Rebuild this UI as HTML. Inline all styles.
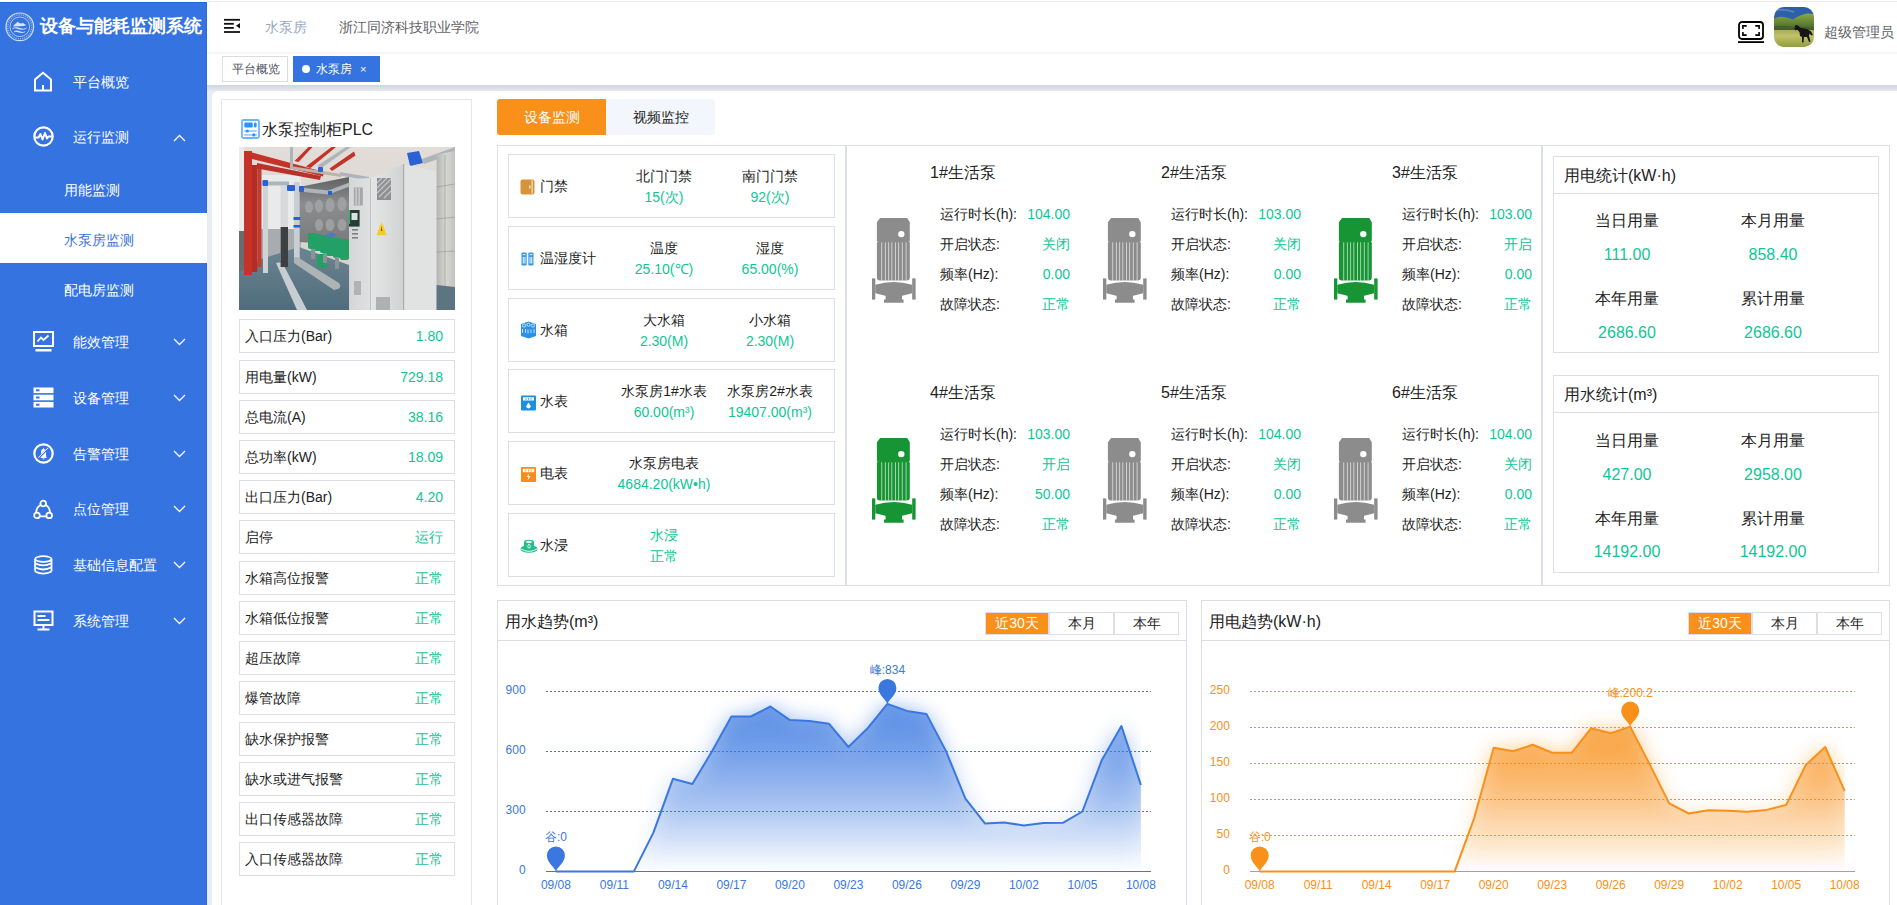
<!DOCTYPE html>
<html><head><meta charset="utf-8">
<style>
*{box-sizing:border-box;margin:0;padding:0}
html,body{width:1897px;height:905px;overflow:hidden;background:#fff;font-family:"Liberation Sans",sans-serif;color:#222}
.a{position:absolute}
.t{position:absolute;white-space:nowrap;line-height:20px;height:20px}
#topline{left:207px;top:1px;width:1690px;height:1px;background:#ececec}
#side{left:0;top:2px;width:207px;height:903px;background:#3473e0}
.mi{position:absolute;left:73px;color:#fff;font-size:14px;line-height:20px;height:20px;white-space:nowrap}
.si{position:absolute;left:64px;color:#fff;font-size:14px;line-height:20px;height:20px;white-space:nowrap}
.ico{position:absolute;left:33px;width:21px;height:21px}
.chev{position:absolute;left:173px;width:13px;height:8px}
/* header */
#hdr{left:207px;top:2px;width:1690px;height:50px;background:#fff}
#hshadow{left:207px;top:52px;width:1690px;height:3px;background:linear-gradient(#f0f1f3,#fff)}
#tabbar{left:207px;top:55px;width:1690px;height:30px;background:#fff}
#tshadow{left:207px;top:85px;width:1690px;height:6px;background:linear-gradient(#d0d4de,#e6e9f1)}
#main{left:207px;top:91px;width:1690px;height:814px;background:#e9ecf3}
#card{left:212px;top:91px;width:1700px;height:830px;background:#fff;border-radius:6px}
.tab{position:absolute;top:56px;height:26px;font-size:12px;line-height:24px;white-space:nowrap}

.bd{border:1px solid #dcdfe8}
.row{position:absolute;left:239px;width:216px;height:34px;border:1px solid #dcdfe8;font-size:14px;line-height:32px;white-space:nowrap}
.rl{position:absolute;left:5px;top:0;color:#222}
.rv{position:absolute;right:11px;top:0;color:#10c695}

.drow{position:absolute;left:508px;width:327px;height:64px;border:1px solid #dcdfe8}
.dl{position:absolute;left:31px;top:21px;font-size:14px;line-height:20px;color:#222;white-space:nowrap}
.dc{position:absolute;width:120px;text-align:center;font-size:14px;line-height:20px;white-space:nowrap;color:#222}
.tv{color:#10c695}
.di{position:absolute;left:11px;top:24px}

.pt{position:absolute;font-size:16px;line-height:22px;color:#222;white-space:nowrap}
.pl{position:absolute;font-size:14px;line-height:20px;color:#222;white-space:nowrap}
.pv{position:absolute;font-size:14px;line-height:20px;color:#10c695;white-space:nowrap;text-align:right;width:80px}

.sb{position:absolute;left:1553px;width:326px;border:1px solid #dcdfe8}
.sh{position:absolute;left:0;top:0;width:324px;border-bottom:1px solid #dcdfe8}
.stt{position:absolute;left:10px;font-size:16px;line-height:22px;color:#222;white-space:nowrap}
.sl{position:absolute;width:120px;text-align:center;font-size:16px;line-height:22px;color:#222;white-space:nowrap}
.sv{position:absolute;width:120px;text-align:center;font-size:16px;line-height:22px;color:#10c695;white-space:nowrap}
.cp{position:absolute;top:600px;height:320px;border:1px solid #dcdfe8}
.ch{position:absolute;left:0;top:0;height:40px;border-bottom:1px solid #dcdfe8}
.btns{position:absolute;top:11px;height:23px;display:flex}
.btn{height:23px;border:1px solid #dcdfe8;font-size:14px;line-height:21px;text-align:center;color:#222;background:#fff}
</style></head>
<body>
<div class="a" id="topline"></div>
<div class="a" id="side">
</div>
<div class="a" style="left:0;top:2px;width:207px;height:1px;background:#2468de"></div>
<div class="a" style="left:206px;top:2px;width:1px;height:903px;background:#2a6adf"></div>
<!-- logo -->
<svg class="a" style="left:5px;top:12px" width="30" height="30" viewBox="0 0 30 30">
 <g fill="none" stroke="#fff" stroke-opacity=".75">
  <circle cx="14.8" cy="14.8" r="13.8" stroke-width="1.2"/>
  <circle cx="14.8" cy="14.8" r="9.8" stroke-width=".8"/>
  <circle cx="14.8" cy="14.8" r="12" stroke-width="1.6" stroke-dasharray="1 1.2" stroke-opacity=".5"/>
 </g>
 <g fill="#fff" fill-opacity=".8">
  <path d="M9 13 L13 9.5 L14 11 L17 11.5 L18 10.5 L19 12 L21.5 13 L19 14 L8 14.5 Z"/>
  <path d="M7.5 16 Q11 14.5 15 16 T22 15.5 L21 17 Q17 18.5 13 17 T8 17.5 Z"/>
  <path d="M9 19 Q12 18 15 19.3 T20.5 19 L19.5 20.5 Q16 21.5 13 20.3 T9.5 20.5 Z"/>
 </g>
</svg>
<div class="t" style="left:40px;top:14px;height:24px;line-height:24px;font-size:18px;font-weight:bold;color:#fff">设备与能耗监测系统</div>

<!-- menu -->
<svg class="ico" style="top:71px;width:20px;height:21px" viewBox="0 0 20 21"><path d="M2 19.5 V8.5 L10 1.8 L18 8.5 V19.5 H2 Z M10 19.5 V14" fill="none" stroke="#fff" stroke-width="2" stroke-linejoin="miter"/></svg>
<div class="mi" style="top:72px">平台概览</div>

<svg class="ico" style="top:126px" viewBox="0 0 21 21"><circle cx="10.5" cy="10.5" r="9.2" fill="none" stroke="#fff" stroke-width="2.2"/><path d="M2.5 11.5 H5.5 L7.5 8 L9.5 13.5 L12 7 L14 12.5 L15.5 10.5 H18.5" fill="none" stroke="#fff" stroke-width="2" stroke-linejoin="round" stroke-linecap="round"/></svg>
<div class="mi" style="top:127px">运行监测</div>
<svg class="chev" style="top:134px" viewBox="0 0 13 8"><path d="M1 7 L6.5 1.5 L12 7" fill="none" stroke="#fff" stroke-width="1.3"/></svg>

<div class="si" style="top:180px">用能监测</div>
<div class="a" style="left:0;top:213px;width:207px;height:50px;background:#fff"></div>
<div class="si" style="top:230px;color:#3473e0">水泵房监测</div>
<div class="si" style="top:280px">配电房监测</div>

<svg class="ico" style="top:331px" viewBox="0 0 21 21"><rect x="1" y="1" width="19" height="14" fill="none" stroke="#fff" stroke-width="2"/><path d="M4.5 10.5 L8 6.5 L10.5 9 L15.5 4.5" fill="none" stroke="#fff" stroke-width="1.8"/><rect x="2.5" y="18" width="16" height="2.5" fill="#fff"/></svg>
<div class="mi" style="top:332px">能效管理</div>
<svg class="chev" style="top:338px" viewBox="0 0 13 8"><path d="M1 1 L6.5 6.5 L12 1" fill="none" stroke="#fff" stroke-width="1.3"/></svg>

<svg class="ico" style="top:387px" viewBox="0 0 21 21"><rect x="0.5" y="0.5" width="20" height="5.6" fill="#fff"/><rect x="0.5" y="7.7" width="20" height="5.6" fill="#fff"/><rect x="0.5" y="14.9" width="20" height="5.6" fill="#fff"/><rect x="3" y="2.3" width="3.5" height="2" fill="#3473e0"/><rect x="3" y="9.5" width="3.5" height="2" fill="#3473e0"/><rect x="3" y="16.7" width="3.5" height="2" fill="#3473e0"/></svg>
<div class="mi" style="top:388px">设备管理</div>
<svg class="chev" style="top:394px" viewBox="0 0 13 8"><path d="M1 1 L6.5 6.5 L12 1" fill="none" stroke="#fff" stroke-width="1.3"/></svg>

<svg class="ico" style="top:443px" viewBox="0 0 21 21"><circle cx="10.5" cy="10.5" r="9.2" fill="none" stroke="#fff" stroke-width="2.2"/><path d="M7.2 15 Q8 14 8 12 V9 Q8 6.5 9.8 6 Q9.8 5.2 10.5 5.2 Q11.2 5.2 11.2 6 Q13 6.5 13 9 V12 Q13 14 13.9 15 Z M9.5 15.5 H11.5 Q11.5 16.6 10.5 16.6 Q9.5 16.6 9.5 15.5Z" fill="#fff"/><path d="M5 15.5 L16 4.5" stroke="#3473e0" stroke-width="1.8"/><path d="M5.3 14.6 L15.3 4.6" stroke="#fff" stroke-width="1"/></svg>
<div class="mi" style="top:444px">告警管理</div>
<svg class="chev" style="top:450px" viewBox="0 0 13 8"><path d="M1 1 L6.5 6.5 L12 1" fill="none" stroke="#fff" stroke-width="1.3"/></svg>

<svg class="ico" style="top:499px" viewBox="0 0 21 21"><g fill="none" stroke="#fff" stroke-width="1.8"><circle cx="10.2" cy="4.5" r="2.8"/><circle cx="4" cy="16.4" r="2.8"/><circle cx="16.2" cy="16.4" r="2.8"/><path d="M7.6 5.8 Q3 9 3.2 13.6 M12.8 5.8 Q17 9 17 13.6 M6.8 17.3 H13.4"/></g></svg>
<div class="mi" style="top:499px">点位管理</div>
<svg class="chev" style="top:505px" viewBox="0 0 13 8"><path d="M1 1 L6.5 6.5 L12 1" fill="none" stroke="#fff" stroke-width="1.3"/></svg>

<svg class="ico" style="top:555px" viewBox="0 0 21 21"><g fill="none" stroke="#fff" stroke-width="1.8"><ellipse cx="10.3" cy="4" rx="8.2" ry="2.8"/><path d="M2.1 4 V16.5 M18.5 4 V16.5"/><path d="M2.1 8.2 Q10.3 12.6 18.5 8.2 M2.1 12.3 Q10.3 16.7 18.5 12.3 M2.1 16.5 Q10.3 20.9 18.5 16.5"/></g></svg>
<div class="mi" style="top:555px">基础信息配置</div>
<svg class="chev" style="top:561px" viewBox="0 0 13 8"><path d="M1 1 L6.5 6.5 L12 1" fill="none" stroke="#fff" stroke-width="1.3"/></svg>

<svg class="ico" style="top:610px" viewBox="0 0 21 21"><g fill="#fff"><path d="M0.5 0.5 H20.5 V16 H0.5 Z M2.5 2.5 V14 H18.5 V2.5 Z" fill-rule="evenodd"/><rect x="4.5" y="5" width="8" height="2"/><rect x="4.5" y="9" width="12" height="2"/><rect x="9.5" y="16" width="2" height="3"/><rect x="4.5" y="18.5" width="12" height="2"/></g></svg>
<div class="mi" style="top:611px">系统管理</div>
<svg class="chev" style="top:617px" viewBox="0 0 13 8"><path d="M1 1 L6.5 6.5 L12 1" fill="none" stroke="#fff" stroke-width="1.3"/></svg>

<!-- header -->
<div class="a" id="hdr"></div>
<div class="a" id="hshadow"></div>
<div class="a" id="tabbar"></div>
<div class="a" id="tshadow"></div>
<div class="a" id="main"></div>
<div class="a" id="card"></div>

<svg class="a" style="left:224px;top:18px" width="16" height="16" viewBox="0 0 16 16"><g fill="#111"><rect x="0" y="0.9" width="16" height="1.8"/><rect x="0" y="4.9" width="9.8" height="1.8"/><rect x="0" y="9" width="9.8" height="1.8"/><rect x="0" y="13.1" width="16" height="1.8"/><path d="M16 5 V10.6 L12 7.8 Z"/></g></svg>
<div class="t" style="left:265px;top:17px;font-size:14px;color:#97a8be">水泵房</div>
<div class="t" style="left:339px;top:17px;font-size:14px;color:#606266">浙江同济科技职业学院</div>

<svg class="a" style="left:1738px;top:21px" width="26" height="22" viewBox="0 0 26 22"><rect x="1" y="1" width="24" height="17" rx="3" fill="none" stroke="#000" stroke-width="1.8"/><g fill="none" stroke="#000" stroke-width="1.6"><path d="M4.9 7.9 V4.9 H8.7 M21.1 7.9 V4.9 H17.3 M4.9 11 V14.1 H8.7 M21.1 11 V14.1 H17.3"/></g><rect x="0" y="20.2" width="26" height="1.8" fill="#000"/></svg>
<div class="a" style="left:1774px;top:7px;width:40px;height:40px;border-radius:10px;overflow:hidden">
 <svg width="40" height="40" viewBox="0 0 40 40">
  <defs><linearGradient id="sky" x1="0" y1="0" x2="0" y2="1"><stop offset="0" stop-color="#2d5da6"/><stop offset="1" stop-color="#2f67b8"/></linearGradient>
  <linearGradient id="hill" x1="0" y1="0" x2="0" y2="1"><stop offset="0" stop-color="#8aa845"/><stop offset=".6" stop-color="#5f7f34"/><stop offset="1" stop-color="#3f5a2a"/></linearGradient>
  <linearGradient id="fld" x1="0" y1="0" x2="0" y2="1"><stop offset="0" stop-color="#a8ac5a"/><stop offset=".35" stop-color="#c3c06a"/><stop offset="1" stop-color="#8f9e3e"/></linearGradient>
  <filter id="avb"><feGaussianBlur stdDeviation=".5"/></filter></defs>
  <g filter="url(#avb)">
  <rect width="40" height="40" fill="url(#sky)"/>
  <path d="M3 3 Q12 2 20 5" stroke="#8fb0d8" stroke-width="1.5" fill="none" opacity=".5"/>
  <path d="M-1 12 Q5 9 10 10 Q16 11 19 12.5 Q25 8 33 6.5 Q38 6 41 8 V24 H-1 Z" fill="url(#hill)"/>
  <path d="M-1 19 Q10 18 20 20 Q30 19 41 21 V25 H-1 Z" fill="#46612c"/>
  <rect y="23" width="40" height="17" fill="url(#fld)"/>
  <path d="M21 18.5 L23 18 L27 21 L33 22 L37 24.5 L39 28 L37.5 28.5 L35.5 26.5 L35 29 L36.5 34.5 L35 35 L33 30 L30 30 L29.5 35.5 L28 35.5 L28 30 L26 29 L25.5 25 L23 22.5 L21.5 23.5 L20.5 22 Z" fill="#141414"/>
  </g>
 </svg>
</div>
<div class="t" style="left:1824px;top:22px;font-size:14px;color:#606266">超级管理员</div>

<div class="tab" style="left:222px;width:66px;border:1px solid #d8dce5;color:#495060;padding-left:9px">平台概览</div>
<div class="tab" style="left:293px;width:87px;background:#3473e0;border:1px solid #3473e0;color:#fff">
 <span class="a" style="left:8px;top:8px;width:8px;height:8px;border-radius:50%;background:#fff"></span>
 <span class="a" style="left:22px;top:0">水泵房</span>
 <span class="a" style="left:66px;top:0;font-size:11px">×</span>
</div>


<!-- PLC panel -->
<div class="a" style="left:221px;top:99px;width:251px;height:830px;border:1px solid #e6e6e6;border-bottom:none"></div>
<svg class="a" style="left:241px;top:119px" width="19" height="20" viewBox="0 0 19 20">
 <rect x="1" y="1" width="17" height="18" rx="1.5" fill="none" stroke="#6cb6ff" stroke-width="1.8"/>
 <rect x="3.3" y="3.5" width="8.5" height="5" rx="1.2" fill="#2a93ff"/>
 <rect x="13" y="3.5" width="2.6" height="5" rx="1.2" fill="#2a93ff"/>
 <rect x="3.2" y="11.3" width="12.6" height="1.4" fill="#7fbfff"/>
 <rect x="3.2" y="15.2" width="12.6" height="1.4" fill="#7fbfff"/>
 <circle cx="6.3" cy="12" r="1.6" fill="#2a93ff"/>
 <circle cx="12.8" cy="15.9" r="1.6" fill="#2a93ff"/>
</svg>
<div class="t" style="left:262px;top:119px;height:22px;line-height:22px;font-size:16px;color:#222">水泵控制柜PLC</div>
<svg class="a" style="left:239px;top:147px" width="216" height="163" viewBox="0 0 216 163">
 <defs>
  <linearGradient id="ceil" x1="0" y1="0" x2="0" y2="1"><stop offset="0" stop-color="#e2ddd8"/><stop offset="1" stop-color="#d3cdc6"/></linearGradient>
  <linearGradient id="floor" x1="0" y1="0" x2="0" y2="1"><stop offset="0" stop-color="#6d8492"/><stop offset="1" stop-color="#4f6c7c"/></linearGradient>
  <linearGradient id="cabA" x1="0" y1="0" x2="1" y2="0"><stop offset="0" stop-color="#d4d7d7"/><stop offset="1" stop-color="#dfe1e1"/></linearGradient>
  <linearGradient id="cabB" x1="0" y1="0" x2="1" y2="0"><stop offset="0" stop-color="#e4e6e6"/><stop offset=".6" stop-color="#dadcdc"/><stop offset="1" stop-color="#cfd2d2"/></linearGradient>
  <linearGradient id="steel" x1="0" y1="0" x2="1" y2="0"><stop offset="0" stop-color="#b4b5b2"/><stop offset=".5" stop-color="#d6d6d2"/><stop offset="1" stop-color="#c2c3c0"/></linearGradient>
  <linearGradient id="tank" x1="0" y1="0" x2="0" y2="1"><stop offset="0" stop-color="#5f6264"/><stop offset=".4" stop-color="#8b8d8e"/><stop offset="1" stop-color="#77797a"/></linearGradient>
  <filter id="soft"><feGaussianBlur stdDeviation=".45"/></filter>
 </defs>
 <g filter="url(#soft)">
 <rect width="216" height="163" fill="url(#ceil)"/>
 <rect x="0" y="0" width="5" height="163" fill="#ecebea"/>
 <rect x="0" y="84" width="5" height="45" fill="#6a6c6e"/>
 <rect x="22" y="28" width="40" height="60" fill="#e9eaea"/>
 <rect x="22" y="82" width="40" height="30" fill="#a9acae"/>
 <path d="M60 40 L110 30 L110 98 L60 95 Z" fill="url(#tank)"/>
 <g fill="#a4a6a7" opacity=".8"><ellipse cx="70" cy="60" rx="4" ry="6"/><ellipse cx="80" cy="59" rx="4" ry="6.5"/><ellipse cx="91" cy="58" rx="4.5" ry="7"/><ellipse cx="103" cy="57" rx="4.5" ry="7"/><ellipse cx="80" cy="78" rx="4" ry="6"/><ellipse cx="91" cy="78" rx="4.5" ry="6"/><ellipse cx="103" cy="78" rx="4.5" ry="6"/></g>
 <path d="M0 125 L22 112 L60 100 L110 118 L110 163 L0 163 Z" fill="url(#floor)"/>
 <path d="M37 116 L43 115 L68 163 L58 163 Z" fill="#c7ced2"/>
 <rect x="41.6" y="39" width="7.4" height="75" fill="#d7d9da"/>
 <rect x="41.6" y="80" width="7.4" height="40" fill="#3d4043"/>
 <rect x="24" y="36" width="5" height="90" fill="#cfd3d6"/>
 <rect x="55" y="35" width="5.7" height="80" fill="#c9ced2"/>
 <rect x="54.5" y="70" width="6.7" height="3" fill="#2b5fd0"/><rect x="54.5" y="78" width="6.7" height="2.5" fill="#2b5fd0"/>
 <g fill="#c4322a">
  <path d="M5 4 H13 V128 H5 Z"/>
  <path d="M13 18 H18.2 V125 H13 Z" fill="#b52e27"/>
  <path d="M18.2 21 H22.5 V120 H18.2 Z" fill="#c23a30"/>
  <path d="M9 4.4 L85 25 L84 29.5 L13 12 Z"/><path d="M18 16 L82 29 L81 33 L18 21.5 Z" fill="#b8302a"/>
  <path d="M55.5 14 L69.5 0 L73.5 0 L59.5 15 Z"/>
  <path d="M67 19.5 L92.5 0 L97 0 L71.5 21 Z"/>
  <path d="M90.5 21.4 L115 4.5 L116.5 8.5 L93 24 Z"/>
 </g>
 <g fill="#aeb5ba">
  <path d="M78.5 18.5 L107 0 L112 0 L81.5 21.5 Z"/>
  <path d="M51 0 H54 V21 H51 Z"/>
  <path d="M51 19 L102 27 L102 30 L51 22 Z" fill="#b9b4a8"/>
  <path d="M23.5 34.5 H50 V38.5 H23.5 Z"/>
  <path d="M65 41 L89.4 43.6 L110.6 35.5 L110.6 39.5 L89.4 47.5 L65 45 Z"/>
  <path d="M101 25 L130 30 L130 33.5 L101 28.5 Z"/>
  <path d="M183 12 L216 0 L216 6 L185 17 Z"/>
 </g>
 <g fill="#2a62d6"><rect x="23.5" y="33" width="5.5" height="6" rx="1"/><rect x="48" y="38" width="8" height="6" rx="1"/><rect x="60" y="39" width="5" height="6" rx="1"/><rect x="79" y="20" width="5" height="5" rx="1"/><rect x="89" y="44" width="4" height="4"/><path d="M168 6 L180 4 L184 16 L171 19 Z"/></g>
 <g fill="#22a066">
  <rect x="69" y="86" width="8" height="16" rx="2"/>
  <rect x="75" y="87" width="8" height="17" rx="2"/>
  <rect x="81" y="88" width="8" height="18" rx="2"/>
  <rect x="87" y="90" width="9" height="19" rx="2"/>
  <rect x="94" y="91" width="9" height="20" rx="2"/>
  <rect x="101" y="92" width="9" height="21" rx="2"/>
  <rect x="78" y="107" width="10" height="14" rx="3"/>
 </g>
 <path d="M86 90 Q92 82 98 89 Z" fill="#3f7bd0"/>
 <path d="M55 111 Q57 109 60 111 L100 136 Q103 140 99 142 L95 143 L55 116 Z" fill="#aeb3b5"/>
 <g fill="#8f9294"><rect x="72" y="102" width="4" height="10"/><rect x="84" y="106" width="4" height="10"/><rect x="96" y="110" width="4" height="12"/></g>
 <path d="M110.6 32 L131.3 31 L131.3 163 L110.6 163 Z" fill="url(#cabA)"/>
 <path d="M131.3 31 L164.7 17.2 L164.7 163 L131.3 163 Z" fill="url(#cabB)"/>
 <path d="M164.7 17.2 L197.6 24.6 L197.6 163 L164.7 163 Z" fill="#e1e3e3"/>
 <rect x="164" y="17" width="1.2" height="146" fill="#a9adae"/>
 <rect x="131" y="31" width=".8" height="132" fill="#b8bbbc"/>
 <path d="M197.6 7.6 L216 4 L216 163 L197.6 163 Z" fill="url(#steel)"/>
 <g stroke="#8f908e" stroke-width=".8" fill="none" opacity=".7"><path d="M197.6 40 L216 37 M197.6 72 L216 70 M197.6 105 L216 104 M206 8 V163"/></g>
 <path d="M197.6 138 L216 140 L216 163 L197.6 163 Z" fill="#5d7482"/>
 <rect x="138" y="31" width="14" height="22" fill="#8e9193"/>
 <g stroke="#c7c9ca" stroke-width="1.1"><path d="M138 36 L143 31 M138 41 L148 31 M138 46 L152 32 M140 50 L152 38 M145 51 L152 44"/></g>
 <rect x="114.8" y="40.5" width="9" height="18" fill="#a4a7a8"/>
 <g fill="#d0d2d2"><rect x="116.5" y="41" width="1.3" height="17"/><rect x="119.5" y="41" width="1.3" height="17"/></g>
 <rect x="110" y="63" width="10.6" height="16.6" fill="#263d37"/>
 <rect x="112.5" y="66" width="6" height="7" fill="#d9e6df"/>
 <rect x="110" y="63" width="1.2" height="14" fill="#2fae6a"/>
 <path d="M142.6 75 L147.7 88.3 L137.6 88.3 Z" fill="#f0cf1a"/>
 <path d="M142.6 79 L143.3 84 L141.9 84 Z" fill="#9a2a1a"/>
 <g fill="#7c7f80"><rect x="113" y="82" width="6" height="1.6"/><rect x="113" y="86" width="6" height="1.6"/><rect x="113" y="90" width="6" height="1.6"/></g>
 <rect x="115" y="134" width="7" height="14" fill="#b1b4b4"/>
 <rect x="137" y="150" width="14" height="13" fill="#aeb1b1"/>
 </g>
</svg>
<div class="row" style="top:319px"><span class="rl">入口压力(Bar)</span><span class="rv">1.80</span></div>
<div class="row" style="top:360px"><span class="rl">用电量(kW)</span><span class="rv">729.18</span></div>
<div class="row" style="top:400px"><span class="rl">总电流(A)</span><span class="rv">38.16</span></div>
<div class="row" style="top:440px"><span class="rl">总功率(kW)</span><span class="rv">18.09</span></div>
<div class="row" style="top:480px"><span class="rl">出口压力(Bar)</span><span class="rv">4.20</span></div>
<div class="row" style="top:520px"><span class="rl">启停</span><span class="rv">运行</span></div>
<div class="row" style="top:561px"><span class="rl">水箱高位报警</span><span class="rv">正常</span></div>
<div class="row" style="top:601px"><span class="rl">水箱低位报警</span><span class="rv">正常</span></div>
<div class="row" style="top:641px"><span class="rl">超压故障</span><span class="rv">正常</span></div>
<div class="row" style="top:681px"><span class="rl">爆管故障</span><span class="rv">正常</span></div>
<div class="row" style="top:722px"><span class="rl">缺水保护报警</span><span class="rv">正常</span></div>
<div class="row" style="top:762px"><span class="rl">缺水或进气报警</span><span class="rv">正常</span></div>
<div class="row" style="top:802px"><span class="rl">出口传感器故障</span><span class="rv">正常</span></div>
<div class="row" style="top:842px"><span class="rl">入口传感器故障</span><span class="rv">正常</span></div>

<!-- device tabs -->
<div class="a" style="left:497px;top:99px;width:109px;height:36px;background:#f8901a;border-radius:3px 0 0 3px;color:#fff;font-size:14px;line-height:36px;text-align:center">设备监测</div>
<div class="a" style="left:606px;top:99px;width:109px;height:36px;background:#f3f7fd;border-radius:0 3px 3px 0;color:#222;font-size:14px;line-height:36px;text-align:center">视频监控</div>
<div class="a bd" style="left:497px;top:145px;width:349px;height:441px"></div>
<div class="a bd" style="left:846px;top:145px;width:696px;height:441px"></div>
<div class="a bd" style="left:1542px;top:145px;width:348px;height:441px"></div>
<div class="drow" style="top:154px"><svg class="di" style="left:11px;top:24px" width="15" height="16" viewBox="0 0 15 16"><rect x="0.5" y="0.5" width="14" height="15" rx="2" fill="#d6953a"/><rect x="11.6" y="1.3" width="1" height="13.4" fill="#fbeedd"/><rect x="9.3" y="6.5" width="1.1" height="3" fill="#fff"/></svg><div class="dl">门禁</div><div class="dc" style="left:95px;top:11px">北门门禁</div><div class="dc tv" style="left:95px;top:32px">15(次)</div><div class="dc" style="left:201px;top:11px">南门门禁</div><div class="dc tv" style="left:201px;top:32px">92(次)</div></div>
<div class="drow" style="top:226px"><svg class="di" style="left:12px;top:25px" width="13" height="14" viewBox="0 0 13 14"><rect x="0.5" y="0.5" width="5.2" height="13" rx="0.8" fill="#3b9be0"/><rect x="7.3" y="0.5" width="5.2" height="13" rx="0.8" fill="#3b9be0"/><g fill="#fff"><rect x="1.8" y="2.2" width="2.6" height="0.9"/><rect x="1.8" y="5" width="0.9" height="6.5"/><rect x="3.5" y="5" width="0.9" height="6.5"/><rect x="8.6" y="2.2" width="2.6" height="0.9"/><rect x="8.6" y="5" width="0.9" height="6.5"/><rect x="10.3" y="5" width="0.9" height="6.5"/></g></svg><div class="dl">温湿度计</div><div class="dc" style="left:95px;top:11px">温度</div><div class="dc tv" style="left:95px;top:32px">25.10(℃)</div><div class="dc" style="left:201px;top:11px">湿度</div><div class="dc tv" style="left:201px;top:32px">65.00(%)</div></div>
<div class="drow" style="top:298px"><svg class="di" style="left:11px;top:22px" width="17" height="18" viewBox="0 0 17 18"><path d="M1 3 L8.5 0.5 L16 3 V15 L8.5 17.5 L1 15 Z" fill="#2b90e6"/><g fill="none" stroke="#fff" stroke-width="0.8" opacity=".9"><circle cx="4" cy="4.5" r="1.6"/><circle cx="8.5" cy="3.7" r="1.6"/><circle cx="13" cy="4.5" r="1.6"/><path d="M2.5 8 V12 M5.5 8 V12 M8 8.5 V12.5 M11 8.5 V12 M14 8 V12"/></g></svg><div class="dl">水箱</div><div class="dc" style="left:95px;top:11px">大水箱</div><div class="dc tv" style="left:95px;top:32px">2.30(M)</div><div class="dc" style="left:201px;top:11px">小水箱</div><div class="dc tv" style="left:201px;top:32px">2.30(M)</div></div>
<div class="drow" style="top:369px"><svg class="di" style="left:12px;top:25px" width="15" height="16" viewBox="0 0 15 16"><rect x="0" y="0.5" width="15" height="15" rx="1" fill="#1d8fe0"/><rect x="2" y="2.3" width="11" height="3.2" fill="#fff"/><rect x="4.6" y="3" width="0.8" height="1.8" fill="#1d8fe0"/><rect x="7.1" y="3" width="0.8" height="1.8" fill="#1d8fe0"/><rect x="9.6" y="3" width="0.8" height="1.8" fill="#1d8fe0"/><path d="M7.5 7.5 Q5.3 10.3 5.3 11.6 Q5.3 13.4 7.5 13.4 Q9.7 13.4 9.7 11.6 Q9.7 10.3 7.5 7.5 Z" fill="#fff"/></svg><div class="dl">水表</div><div class="dc" style="left:95px;top:11px">水泵房1#水表</div><div class="dc tv" style="left:95px;top:32px">60.00(m³)</div><div class="dc" style="left:201px;top:11px">水泵房2#水表</div><div class="dc tv" style="left:201px;top:32px">19407.00(m³)</div></div>
<div class="drow" style="top:441px"><svg class="di" style="left:12px;top:25px" width="15" height="15" viewBox="0 0 15 15"><rect x="0" y="0" width="15" height="15" rx="1" fill="#f88b1e"/><rect x="1.8" y="1.8" width="11.4" height="3.4" fill="#fff"/><rect x="4.4" y="2.5" width="0.8" height="2" fill="#f88b1e"/><rect x="7.1" y="2.5" width="0.8" height="2" fill="#f88b1e"/><rect x="9.8" y="2.5" width="0.8" height="2" fill="#f88b1e"/><path d="M8.2 6.5 L5.5 10 H7.5 L6.6 13.3 L9.6 9.3 H7.6 Z" fill="#fff"/></svg><div class="dl">电表</div><div class="dc" style="left:95px;top:11px">水泵房电表</div><div class="dc tv" style="left:95px;top:32px">4684.20(kW•h)</div></div>
<div class="drow" style="top:513px"><svg class="di" style="left:11px;top:25px" width="18" height="14" viewBox="0 0 18 14"><ellipse cx="9" cy="10" rx="8.6" ry="3.8" fill="#22bf8c"/><path d="M0.6 9.8 Q9 15 17.4 9.8" fill="none" stroke="#fff" stroke-width="0.9"/><path d="M4 3 V9 Q9 12 14 9 V3 Z" fill="#22bf8c"/><ellipse cx="9" cy="3" rx="5" ry="2.3" fill="#22bf8c"/><ellipse cx="9" cy="2.9" rx="3" ry="1.1" fill="#fff"/><path d="M9 5 Q7.7 7 7.7 7.8 Q7.7 9 9 9 Q10.3 9 10.3 7.8 Q10.3 7 9 5Z" fill="none" stroke="#fff" stroke-width=".8"/></svg><div class="dl">水浸</div><div class="dc" style="left:95px;top:11px"><span class='tv'>水浸</span></div><div class="dc tv" style="left:95px;top:32px">正常</div></div>

<svg width="0" height="0" style="position:absolute">
 <defs>
  <symbol id="pump" viewBox="0 0 44 85">
   <path d="M8.1 0 H35.2 L37.8 4.2 V22.8 L37 23.8 L37.8 24.8 V59.6 Q37.8 62.6 34.8 62.6 H7.9 Q4.9 62.6 4.9 59.6 V24.8 L5.7 23.8 L4.9 22.8 V4.2 Z"/>
   <rect x="0" y="60.4" width="3.3" height="21.2"/>
   <rect x="40.2" y="60.4" width="3.4" height="21.2"/>
   <path d="M3.3 66.8 Q21.8 61.2 40.2 66.8 V75.3 Q21.8 81.5 3.3 75.3 Z"/>
   <path d="M13.6 76 H30 V81.6 H31.6 V84.8 H12 V81.6 H13.6 Z"/>
  </symbol>
 </defs>
</svg>

<svg class="a" style="left:872px;top:218px" width="44" height="85" viewBox="0 0 44 85"><use href="#pump" fill="#8c8c8c"/><rect x="9.2" y="24.3" width="1" height="38.5" fill="#fff" opacity=".6"/><rect x="12.9" y="24.3" width="1" height="38.5" fill="#fff" opacity=".6"/><rect x="16.1" y="24.3" width="1" height="38.5" fill="#fff" opacity=".6"/><rect x="19.3" y="24.3" width="1" height="38.5" fill="#fff" opacity=".6"/><rect x="23" y="24.3" width="1" height="38.5" fill="#fff" opacity=".6"/><rect x="26.1" y="24.3" width="1" height="38.5" fill="#fff" opacity=".6"/><rect x="29.8" y="24.3" width="1" height="38.5" fill="#fff" opacity=".6"/><rect x="33.6" y="24.3" width="1" height="38.5" fill="#fff" opacity=".6"/><circle cx="29.3" cy="16.1" r="3.2" fill="#fff"/></svg>
<div class="pt" style="left:930px;top:162px">1#生活泵</div>
<div class="pl" style="left:940px;top:204px">运行时长(h):</div><div class="pv" style="left:990px;top:204px">104.00</div>
<div class="pl" style="left:940px;top:234px">开启状态:</div><div class="pv" style="left:990px;top:234px">关闭</div>
<div class="pl" style="left:940px;top:264px">频率(Hz):</div><div class="pv" style="left:990px;top:264px">0.00</div>
<div class="pl" style="left:940px;top:294px">故障状态:</div><div class="pv" style="left:990px;top:294px">正常</div>
<svg class="a" style="left:1103px;top:218px" width="44" height="85" viewBox="0 0 44 85"><use href="#pump" fill="#8c8c8c"/><rect x="9.2" y="24.3" width="1" height="38.5" fill="#fff" opacity=".6"/><rect x="12.9" y="24.3" width="1" height="38.5" fill="#fff" opacity=".6"/><rect x="16.1" y="24.3" width="1" height="38.5" fill="#fff" opacity=".6"/><rect x="19.3" y="24.3" width="1" height="38.5" fill="#fff" opacity=".6"/><rect x="23" y="24.3" width="1" height="38.5" fill="#fff" opacity=".6"/><rect x="26.1" y="24.3" width="1" height="38.5" fill="#fff" opacity=".6"/><rect x="29.8" y="24.3" width="1" height="38.5" fill="#fff" opacity=".6"/><rect x="33.6" y="24.3" width="1" height="38.5" fill="#fff" opacity=".6"/><circle cx="29.3" cy="16.1" r="3.2" fill="#fff"/></svg>
<div class="pt" style="left:1161px;top:162px">2#生活泵</div>
<div class="pl" style="left:1171px;top:204px">运行时长(h):</div><div class="pv" style="left:1221px;top:204px">103.00</div>
<div class="pl" style="left:1171px;top:234px">开启状态:</div><div class="pv" style="left:1221px;top:234px">关闭</div>
<div class="pl" style="left:1171px;top:264px">频率(Hz):</div><div class="pv" style="left:1221px;top:264px">0.00</div>
<div class="pl" style="left:1171px;top:294px">故障状态:</div><div class="pv" style="left:1221px;top:294px">正常</div>
<svg class="a" style="left:1334px;top:218px" width="44" height="85" viewBox="0 0 44 85"><use href="#pump" fill="#179433"/><rect x="9.2" y="24.3" width="1" height="38.5" fill="#fff" opacity=".6"/><rect x="12.9" y="24.3" width="1" height="38.5" fill="#fff" opacity=".6"/><rect x="16.1" y="24.3" width="1" height="38.5" fill="#fff" opacity=".6"/><rect x="19.3" y="24.3" width="1" height="38.5" fill="#fff" opacity=".6"/><rect x="23" y="24.3" width="1" height="38.5" fill="#fff" opacity=".6"/><rect x="26.1" y="24.3" width="1" height="38.5" fill="#fff" opacity=".6"/><rect x="29.8" y="24.3" width="1" height="38.5" fill="#fff" opacity=".6"/><rect x="33.6" y="24.3" width="1" height="38.5" fill="#fff" opacity=".6"/><circle cx="29.3" cy="16.1" r="3.2" fill="#fff"/></svg>
<div class="pt" style="left:1392px;top:162px">3#生活泵</div>
<div class="pl" style="left:1402px;top:204px">运行时长(h):</div><div class="pv" style="left:1452px;top:204px">103.00</div>
<div class="pl" style="left:1402px;top:234px">开启状态:</div><div class="pv" style="left:1452px;top:234px">开启</div>
<div class="pl" style="left:1402px;top:264px">频率(Hz):</div><div class="pv" style="left:1452px;top:264px">0.00</div>
<div class="pl" style="left:1402px;top:294px">故障状态:</div><div class="pv" style="left:1452px;top:294px">正常</div>
<svg class="a" style="left:872px;top:438px" width="44" height="85" viewBox="0 0 44 85"><use href="#pump" fill="#179433"/><rect x="9.2" y="24.3" width="1" height="38.5" fill="#fff" opacity=".6"/><rect x="12.9" y="24.3" width="1" height="38.5" fill="#fff" opacity=".6"/><rect x="16.1" y="24.3" width="1" height="38.5" fill="#fff" opacity=".6"/><rect x="19.3" y="24.3" width="1" height="38.5" fill="#fff" opacity=".6"/><rect x="23" y="24.3" width="1" height="38.5" fill="#fff" opacity=".6"/><rect x="26.1" y="24.3" width="1" height="38.5" fill="#fff" opacity=".6"/><rect x="29.8" y="24.3" width="1" height="38.5" fill="#fff" opacity=".6"/><rect x="33.6" y="24.3" width="1" height="38.5" fill="#fff" opacity=".6"/><circle cx="29.3" cy="16.1" r="3.2" fill="#fff"/></svg>
<div class="pt" style="left:930px;top:382px">4#生活泵</div>
<div class="pl" style="left:940px;top:424px">运行时长(h):</div><div class="pv" style="left:990px;top:424px">103.00</div>
<div class="pl" style="left:940px;top:454px">开启状态:</div><div class="pv" style="left:990px;top:454px">开启</div>
<div class="pl" style="left:940px;top:484px">频率(Hz):</div><div class="pv" style="left:990px;top:484px">50.00</div>
<div class="pl" style="left:940px;top:514px">故障状态:</div><div class="pv" style="left:990px;top:514px">正常</div>
<svg class="a" style="left:1103px;top:438px" width="44" height="85" viewBox="0 0 44 85"><use href="#pump" fill="#8c8c8c"/><rect x="9.2" y="24.3" width="1" height="38.5" fill="#fff" opacity=".6"/><rect x="12.9" y="24.3" width="1" height="38.5" fill="#fff" opacity=".6"/><rect x="16.1" y="24.3" width="1" height="38.5" fill="#fff" opacity=".6"/><rect x="19.3" y="24.3" width="1" height="38.5" fill="#fff" opacity=".6"/><rect x="23" y="24.3" width="1" height="38.5" fill="#fff" opacity=".6"/><rect x="26.1" y="24.3" width="1" height="38.5" fill="#fff" opacity=".6"/><rect x="29.8" y="24.3" width="1" height="38.5" fill="#fff" opacity=".6"/><rect x="33.6" y="24.3" width="1" height="38.5" fill="#fff" opacity=".6"/><circle cx="29.3" cy="16.1" r="3.2" fill="#fff"/></svg>
<div class="pt" style="left:1161px;top:382px">5#生活泵</div>
<div class="pl" style="left:1171px;top:424px">运行时长(h):</div><div class="pv" style="left:1221px;top:424px">104.00</div>
<div class="pl" style="left:1171px;top:454px">开启状态:</div><div class="pv" style="left:1221px;top:454px">关闭</div>
<div class="pl" style="left:1171px;top:484px">频率(Hz):</div><div class="pv" style="left:1221px;top:484px">0.00</div>
<div class="pl" style="left:1171px;top:514px">故障状态:</div><div class="pv" style="left:1221px;top:514px">正常</div>
<svg class="a" style="left:1334px;top:438px" width="44" height="85" viewBox="0 0 44 85"><use href="#pump" fill="#8c8c8c"/><rect x="9.2" y="24.3" width="1" height="38.5" fill="#fff" opacity=".6"/><rect x="12.9" y="24.3" width="1" height="38.5" fill="#fff" opacity=".6"/><rect x="16.1" y="24.3" width="1" height="38.5" fill="#fff" opacity=".6"/><rect x="19.3" y="24.3" width="1" height="38.5" fill="#fff" opacity=".6"/><rect x="23" y="24.3" width="1" height="38.5" fill="#fff" opacity=".6"/><rect x="26.1" y="24.3" width="1" height="38.5" fill="#fff" opacity=".6"/><rect x="29.8" y="24.3" width="1" height="38.5" fill="#fff" opacity=".6"/><rect x="33.6" y="24.3" width="1" height="38.5" fill="#fff" opacity=".6"/><circle cx="29.3" cy="16.1" r="3.2" fill="#fff"/></svg>
<div class="pt" style="left:1392px;top:382px">6#生活泵</div>
<div class="pl" style="left:1402px;top:424px">运行时长(h):</div><div class="pv" style="left:1452px;top:424px">104.00</div>
<div class="pl" style="left:1402px;top:454px">开启状态:</div><div class="pv" style="left:1452px;top:454px">关闭</div>
<div class="pl" style="left:1402px;top:484px">频率(Hz):</div><div class="pv" style="left:1452px;top:484px">0.00</div>
<div class="pl" style="left:1402px;top:514px">故障状态:</div><div class="pv" style="left:1452px;top:514px">正常</div>
<div class="sb" style="top:156px;height:197px"><div class="sh" style="height:37px"><div class="stt" style="top:8px">用电统计(kW·h)</div></div><div class="sl" style="left:13px;top:53px">当日用量</div><div class="sv" style="left:13px;top:87px">111.00</div><div class="sl" style="left:159px;top:53px">本月用量</div><div class="sv" style="left:159px;top:87px">858.40</div><div class="sl" style="left:13px;top:131px">本年用量</div><div class="sv" style="left:13px;top:165px">2686.60</div><div class="sl" style="left:159px;top:131px">累计用量</div><div class="sv" style="left:159px;top:165px">2686.60</div></div>
<div class="sb" style="top:375px;height:198px"><div class="sh" style="height:37px"><div class="stt" style="top:8px">用水统计(m³)</div></div><div class="sl" style="left:13px;top:54px">当日用量</div><div class="sv" style="left:13px;top:88px">427.00</div><div class="sl" style="left:159px;top:54px">本月用量</div><div class="sv" style="left:159px;top:88px">2958.00</div><div class="sl" style="left:13px;top:132px">本年用量</div><div class="sv" style="left:13px;top:165px">14192.00</div><div class="sl" style="left:159px;top:132px">累计用量</div><div class="sv" style="left:159px;top:165px">14192.00</div></div>
<div class="cp" style="left:497px;width:690px"><div class="ch" style="width:688px"><div class="stt" style="top:10px;left:7px">用水趋势(m³)</div><div class="btns" style="right:7px"><div class="btn" style="width:64px;background:#f8901a;background-clip:padding-box;color:#fff">近30天</div><div class="btn" style="width:65px">本月</div><div class="btn" style="width:65px">本年</div></div></div></div><svg class="a" style="left:0;top:0" width="1897" height="905" viewBox="0 0 1897 905"><defs><linearGradient id="g1" x1="0" y1="704" x2="0" y2="871" gradientUnits="userSpaceOnUse"><stop offset="0" stop-color="#3a78e0" stop-opacity=".68"/><stop offset="1" stop-color="#3a78e0" stop-opacity="0"/></linearGradient><filter id="f1" x="-20%" y="-40%" width="140%" height="180%"><feGaussianBlur stdDeviation="10"/></filter></defs><clipPath id="c1"><rect x="555.9" y="600" width="585.0000000000001" height="271.4"/></clipPath><g clip-path="url(#c1)"><path d="M555.9,871.4 L555.9,871.4 575.4,871.4 594.9,871.4 614.4,871.4 633.9,871.4 653.4,832.6 672.9,778.8 692.4,784.0 711.9,751.5 731.4,716.5 750.9,716.5 770.4,706.5 789.9,720.1 809.4,721.1 828.9,723.7 848.4,747.0 867.9,728.0 887.4,703.9 906.9,710.9 926.4,713.9 945.9,750.9 965.4,798.7 984.9,823.4 1004.4,822.4 1023.9,825.6 1043.4,823.0 1062.9,822.8 1082.4,811.5 1101.9,759.9 1121.4,726.0 1140.9,785.0 L1140.9,871.4 Z" fill="url(#g1)" opacity=".85" filter="url(#f1)"/></g><path d="M555.9,871.4 L555.9,871.4 575.4,871.4 594.9,871.4 614.4,871.4 633.9,871.4 653.4,832.6 672.9,778.8 692.4,784.0 711.9,751.5 731.4,716.5 750.9,716.5 770.4,706.5 789.9,720.1 809.4,721.1 828.9,723.7 848.4,747.0 867.9,728.0 887.4,703.9 906.9,710.9 926.4,713.9 945.9,750.9 965.4,798.7 984.9,823.4 1004.4,822.4 1023.9,825.6 1043.4,823.0 1062.9,822.8 1082.4,811.5 1101.9,759.9 1121.4,726.0 1140.9,785.0 L1140.9,871.4 Z" fill="url(#g1)"/><line x1="546" y1="811.5" x2="1151" y2="811.5" stroke="#3a78e0" stroke-width="1" stroke-dasharray="2 2"/><text x="525.6" y="814.0" font-size="12" fill="#3a78e0" text-anchor="end" font-family="Liberation Sans">300</text><line x1="546" y1="751.5" x2="1151" y2="751.5" stroke="#3a78e0" stroke-width="1" stroke-dasharray="2 2"/><text x="525.6" y="754.0" font-size="12" fill="#3a78e0" text-anchor="end" font-family="Liberation Sans">600</text><line x1="546" y1="691.5" x2="1151" y2="691.5" stroke="#3a78e0" stroke-width="1" stroke-dasharray="2 2"/><text x="525.6" y="694.0" font-size="12" fill="#3a78e0" text-anchor="end" font-family="Liberation Sans">900</text><text x="525.6" y="874.0" font-size="12" fill="#3a78e0" text-anchor="end" font-family="Liberation Sans">0</text><line x1="546" y1="871.5" x2="1151" y2="871.5" stroke="#3a78e0" stroke-width="1"/><polyline points="555.9,871.4 575.4,871.4 594.9,871.4 614.4,871.4 633.9,871.4 653.4,832.6 672.9,778.8 692.4,784.0 711.9,751.5 731.4,716.5 750.9,716.5 770.4,706.5 789.9,720.1 809.4,721.1 828.9,723.7 848.4,747.0 867.9,728.0 887.4,703.9 906.9,710.9 926.4,713.9 945.9,750.9 965.4,798.7 984.9,823.4 1004.4,822.4 1023.9,825.6 1043.4,823.0 1062.9,822.8 1082.4,811.5 1101.9,759.9 1121.4,726.0 1140.9,785.0" fill="none" stroke="#3a78e0" stroke-width="2" stroke-linejoin="round"/><text x="555.9" y="889" font-size="12" fill="#3a78e0" text-anchor="middle" font-family="Liberation Sans">09/08</text><text x="614.4" y="889" font-size="12" fill="#3a78e0" text-anchor="middle" font-family="Liberation Sans">09/11</text><text x="672.9" y="889" font-size="12" fill="#3a78e0" text-anchor="middle" font-family="Liberation Sans">09/14</text><text x="731.4" y="889" font-size="12" fill="#3a78e0" text-anchor="middle" font-family="Liberation Sans">09/17</text><text x="789.9" y="889" font-size="12" fill="#3a78e0" text-anchor="middle" font-family="Liberation Sans">09/20</text><text x="848.4" y="889" font-size="12" fill="#3a78e0" text-anchor="middle" font-family="Liberation Sans">09/23</text><text x="906.9" y="889" font-size="12" fill="#3a78e0" text-anchor="middle" font-family="Liberation Sans">09/26</text><text x="965.4" y="889" font-size="12" fill="#3a78e0" text-anchor="middle" font-family="Liberation Sans">09/29</text><text x="1023.9" y="889" font-size="12" fill="#3a78e0" text-anchor="middle" font-family="Liberation Sans">10/02</text><text x="1082.4" y="889" font-size="12" fill="#3a78e0" text-anchor="middle" font-family="Liberation Sans">10/05</text><text x="1140.9" y="889" font-size="12" fill="#3a78e0" text-anchor="middle" font-family="Liberation Sans">10/08</text><path transform="translate(887.4,703.9)" d="M0 0 C-1.5 -4.5 -9 -9 -9 -16 A9 9 0 1 1 9 -16 C9 -9 1.5 -4.5 0 0 Z" fill="#3a78e0"/><text x="887.4" y="673.9" font-size="12" fill="#3a78e0" text-anchor="middle" font-family="Liberation Sans">峰:834</text><path transform="translate(555.9,871.4)" d="M0 0 C-1.5 -4.5 -9 -9 -9 -16 A9 9 0 1 1 9 -16 C9 -9 1.5 -4.5 0 0 Z" fill="#3a78e0"/><text x="555.9" y="841.4" font-size="12" fill="#3a78e0" text-anchor="middle" font-family="Liberation Sans">谷:0</text></svg>
<div class="cp" style="left:1201px;width:689px"><div class="ch" style="width:687px"><div class="stt" style="top:10px;left:7px">用电趋势(kW·h)</div><div class="btns" style="right:7px"><div class="btn" style="width:64px;background:#f8901a;background-clip:padding-box;color:#fff">近30天</div><div class="btn" style="width:65px">本月</div><div class="btn" style="width:65px">本年</div></div></div></div><svg class="a" style="left:0;top:0" width="1897" height="905" viewBox="0 0 1897 905"><defs><linearGradient id="g2" x1="0" y1="724" x2="0" y2="871" gradientUnits="userSpaceOnUse"><stop offset="0" stop-color="#f8901a" stop-opacity=".68"/><stop offset="1" stop-color="#f8901a" stop-opacity="0"/></linearGradient><filter id="f2" x="-20%" y="-40%" width="140%" height="180%"><feGaussianBlur stdDeviation="10"/></filter></defs><clipPath id="c2"><rect x="1259.7" y="600" width="585.0" height="271.4"/></clipPath><g clip-path="url(#c2)"><path d="M1259.7,871.4 L1259.7,871.4 1279.2,871.4 1298.7,871.4 1318.2,871.4 1337.7,871.4 1357.2,871.4 1376.7,871.4 1396.2,871.4 1415.7,871.4 1435.2,871.4 1454.7,871.4 1474.2,818.1 1493.7,747.7 1513.2,751.3 1532.7,744.8 1552.2,752.8 1571.7,752.8 1591.2,728.2 1610.7,733.3 1630.2,726.6 1649.7,764.4 1669.2,803.4 1688.7,813.5 1708.2,810.3 1727.7,810.7 1747.2,811.7 1766.7,809.9 1786.2,804.9 1805.7,765.1 1825.2,747.0 1844.7,791.1 L1844.7,871.4 Z" fill="url(#g2)" opacity=".85" filter="url(#f2)"/></g><path d="M1259.7,871.4 L1259.7,871.4 1279.2,871.4 1298.7,871.4 1318.2,871.4 1337.7,871.4 1357.2,871.4 1376.7,871.4 1396.2,871.4 1415.7,871.4 1435.2,871.4 1454.7,871.4 1474.2,818.1 1493.7,747.7 1513.2,751.3 1532.7,744.8 1552.2,752.8 1571.7,752.8 1591.2,728.2 1610.7,733.3 1630.2,726.6 1649.7,764.4 1669.2,803.4 1688.7,813.5 1708.2,810.3 1727.7,810.7 1747.2,811.7 1766.7,809.9 1786.2,804.9 1805.7,765.1 1825.2,747.0 1844.7,791.1 L1844.7,871.4 Z" fill="url(#g2)"/><line x1="1250" y1="835.5" x2="1855" y2="835.5" stroke="#f8901a" stroke-width="1" stroke-dasharray="2 2"/><text x="1229.9" y="838.0" font-size="12" fill="#f8901a" text-anchor="end" font-family="Liberation Sans">50</text><line x1="1250" y1="799.5" x2="1855" y2="799.5" stroke="#f8901a" stroke-width="1" stroke-dasharray="2 2"/><text x="1229.9" y="802.0" font-size="12" fill="#f8901a" text-anchor="end" font-family="Liberation Sans">100</text><line x1="1250" y1="763.5" x2="1855" y2="763.5" stroke="#f8901a" stroke-width="1" stroke-dasharray="2 2"/><text x="1229.9" y="766.0" font-size="12" fill="#f8901a" text-anchor="end" font-family="Liberation Sans">150</text><line x1="1250" y1="727.5" x2="1855" y2="727.5" stroke="#f8901a" stroke-width="1" stroke-dasharray="2 2"/><text x="1229.9" y="730.0" font-size="12" fill="#f8901a" text-anchor="end" font-family="Liberation Sans">200</text><line x1="1250" y1="691.5" x2="1855" y2="691.5" stroke="#f8901a" stroke-width="1" stroke-dasharray="2 2"/><text x="1229.9" y="694.0" font-size="12" fill="#f8901a" text-anchor="end" font-family="Liberation Sans">250</text><text x="1229.9" y="874.0" font-size="12" fill="#f8901a" text-anchor="end" font-family="Liberation Sans">0</text><line x1="1250" y1="871.5" x2="1855" y2="871.5" stroke="#f8901a" stroke-width="1"/><polyline points="1259.7,871.4 1279.2,871.4 1298.7,871.4 1318.2,871.4 1337.7,871.4 1357.2,871.4 1376.7,871.4 1396.2,871.4 1415.7,871.4 1435.2,871.4 1454.7,871.4 1474.2,818.1 1493.7,747.7 1513.2,751.3 1532.7,744.8 1552.2,752.8 1571.7,752.8 1591.2,728.2 1610.7,733.3 1630.2,726.6 1649.7,764.4 1669.2,803.4 1688.7,813.5 1708.2,810.3 1727.7,810.7 1747.2,811.7 1766.7,809.9 1786.2,804.9 1805.7,765.1 1825.2,747.0 1844.7,791.1" fill="none" stroke="#f8901a" stroke-width="2" stroke-linejoin="round"/><text x="1259.7" y="889" font-size="12" fill="#f8901a" text-anchor="middle" font-family="Liberation Sans">09/08</text><text x="1318.2" y="889" font-size="12" fill="#f8901a" text-anchor="middle" font-family="Liberation Sans">09/11</text><text x="1376.7" y="889" font-size="12" fill="#f8901a" text-anchor="middle" font-family="Liberation Sans">09/14</text><text x="1435.2" y="889" font-size="12" fill="#f8901a" text-anchor="middle" font-family="Liberation Sans">09/17</text><text x="1493.7" y="889" font-size="12" fill="#f8901a" text-anchor="middle" font-family="Liberation Sans">09/20</text><text x="1552.2" y="889" font-size="12" fill="#f8901a" text-anchor="middle" font-family="Liberation Sans">09/23</text><text x="1610.7" y="889" font-size="12" fill="#f8901a" text-anchor="middle" font-family="Liberation Sans">09/26</text><text x="1669.2" y="889" font-size="12" fill="#f8901a" text-anchor="middle" font-family="Liberation Sans">09/29</text><text x="1727.7" y="889" font-size="12" fill="#f8901a" text-anchor="middle" font-family="Liberation Sans">10/02</text><text x="1786.2" y="889" font-size="12" fill="#f8901a" text-anchor="middle" font-family="Liberation Sans">10/05</text><text x="1844.7" y="889" font-size="12" fill="#f8901a" text-anchor="middle" font-family="Liberation Sans">10/08</text><path transform="translate(1630.2,726.6)" d="M0 0 C-1.5 -4.5 -9 -9 -9 -16 A9 9 0 1 1 9 -16 C9 -9 1.5 -4.5 0 0 Z" fill="#f8901a"/><text x="1630.2" y="696.6" font-size="12" fill="#f8901a" text-anchor="middle" font-family="Liberation Sans">峰:200.2</text><path transform="translate(1259.7,871.4)" d="M0 0 C-1.5 -4.5 -9 -9 -9 -16 A9 9 0 1 1 9 -16 C9 -9 1.5 -4.5 0 0 Z" fill="#f8901a"/><text x="1259.7" y="841.4" font-size="12" fill="#f8901a" text-anchor="middle" font-family="Liberation Sans">谷:0</text></svg>
</body></html>
